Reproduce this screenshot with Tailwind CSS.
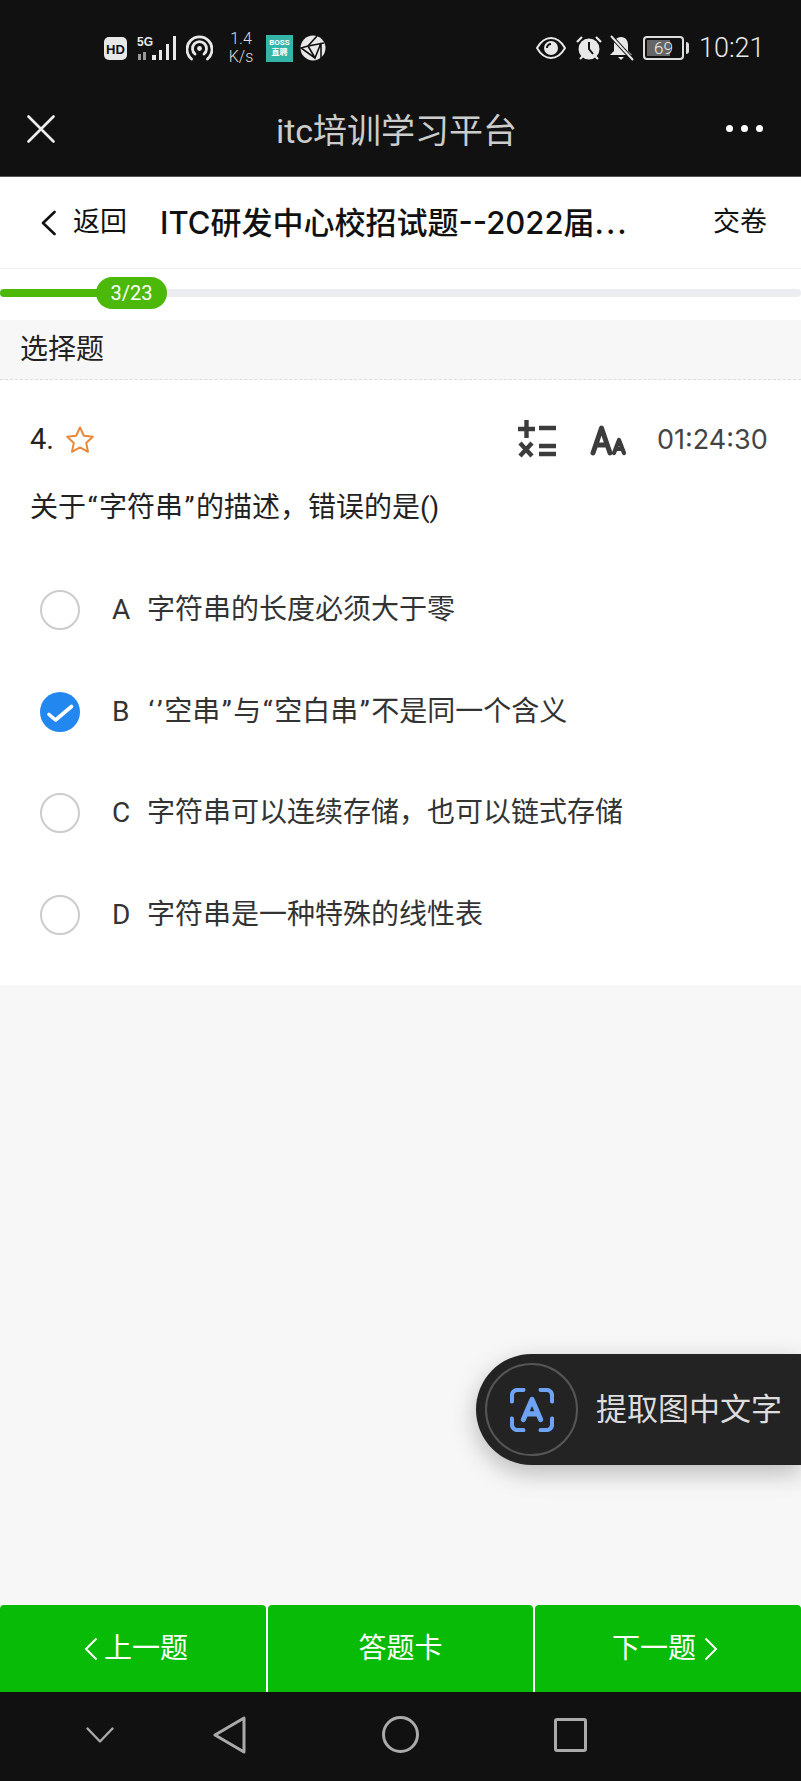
<!DOCTYPE html>
<html lang="zh-CN">
<head>
<meta charset="UTF-8">
<meta name="viewport" content="width=device-width, initial-scale=1.0">
<script src="https://cdn.jsdelivr.net/npm/@tailwindcss/browser@4"></script>
<title>itc培训学习平台</title>
</head>
<body>
<div class="relative flex h-[1781px] w-[801px] flex-col overflow-hidden bg-[#f7f7f7] font-['Roboto','Noto_Sans_CJK_SC',sans-serif]">

  <!-- status bar -->
  <div class="flex h-[96px] items-center bg-[#111] pl-[104px] text-[#e8e8e8]">
    <svg class="h-[23px] w-[23px]" viewBox="0 0 23 23"><rect width="23" height="23" rx="5" fill="#e8e8e8"/><text x="11.5" y="16.5" text-anchor="middle" font-size="13" font-weight="700" fill="#111" font-family="Liberation Sans">HD</text></svg>
    <svg class="ml-[10px] h-[26px] w-[40px]" viewBox="0 0 40 26">
      <text x="0" y="11" font-size="12" font-weight="700" fill="#e8e8e8" font-family="Liberation Sans">5G</text>
      <path d="M1 19h3v6H1zM6 17h3v8H6z" fill="#999"/>
      <path d="M15 20h4v5h-4zM22 15h3v10h-3zM29 9h3v16h-3zM36 1h3v24h-3z" fill="#e8e8e8"/>
    </svg>
    <svg class="ml-[9px] h-[27px] w-[27px]" viewBox="0 0 27 27" fill="none" stroke="#e8e8e8" stroke-width="2.8" stroke-linecap="round">
      <path d="M5.5 24a12.5 12.5 0 1 1 16 0"/><path d="M9 19a7 7 0 1 1 9 0"/><circle cx="13.5" cy="13.5" r="2.4" fill="#e8e8e8" stroke="none"/>
    </svg>
    <div class="ml-[14px] flex w-[28px] flex-col items-center text-[16px] leading-[18px] font-light text-[#ddd]"><span>1.4</span><span>K/s</span></div>
    <div class="ml-[11px] flex h-[27px] w-[27px] flex-col items-center justify-center bg-[#34b5a8] text-[8px] leading-[10px] font-bold text-white"><span>BOSS</span><span>直聘</span></div>
    <svg class="ml-[7px] h-[26px] w-[26px]" viewBox="0 0 26 26">
      <circle cx="13" cy="13" r="12.5" fill="#e8e8e8"/>
      <path d="M17 1 8 11l16-3M8 11l-7 2 14 10M8 11l7 12 6-15v15" fill="none" stroke="#111" stroke-width="1.6"/>
    </svg>

    <svg class="ml-[210px] h-[22px] w-[30px]" viewBox="0 0 30 22">
      <path d="M1 11C5 4 10 1 15 1s10 3 14 10c-4 7-9 10-14 10S5 18 1 11Z" fill="none" stroke="#e8e8e8" stroke-width="2"/>
      <circle cx="15" cy="11" r="7" fill="#e8e8e8"/><path d="M11 11a4 4 0 0 1 4-4" stroke="#111" stroke-width="2" fill="none"/>
    </svg>
    <svg class="ml-[9px] h-[26px] w-[28px]" viewBox="0 0 28 26">
      <circle cx="14" cy="14" r="10.5" fill="#e8e8e8"/>
      <path d="M14 7v7l4 5" fill="none" stroke="#111" stroke-width="2"/>
      <path d="M2 7l5-5M26 7l-5-5M5 24l3-3M23 24l-3-3" stroke="#e8e8e8" stroke-width="2.2" fill="none"/>
    </svg>
    <svg class="ml-[6px] h-[26px] w-[25px]" viewBox="0 0 25 26">
      <path d="M12 2c5 0 7 4 7 8v6l4 4H1l4-4v-6c0-4 2-8 7-8Z" fill="#e8e8e8"/><path d="M9 22h6l-3 3z" fill="#e8e8e8"/>
      <path d="M2 1l22 24" stroke="#111" stroke-width="4"/><path d="M2 1l22 24" stroke="#e8e8e8" stroke-width="2"/>
    </svg>
    <div class="ml-[9px] flex h-[24px] w-[41px] items-center rounded-[4px] border-2 border-[#ddd] p-[2px]">
      <div class="flex h-full w-full items-center justify-center bg-[linear-gradient(90deg,#666_0,#666_69%,transparent_69%)] text-[17px] leading-none font-light text-[#eee]">69</div>
    </div>
    <div class="ml-[2px] h-[12px] w-[3px] rounded-r-sm bg-[#ddd]"></div>
    <div class="ml-[10px] text-[27px] leading-none font-light text-[#e8e8e8]">10:21</div>
  </div>

  <!-- webview title bar -->
  <div class="flex h-[81px] items-center justify-between border-b border-[#555] bg-[#111] pr-[38px] pb-[15px] pl-[27px]">
    <svg class="h-[28px] w-[28px]" viewBox="0 0 28 28" stroke="#eee" stroke-width="2.6" stroke-linecap="round"><path d="M1.5 1.5l25 25M26.5 1.5l-25 25"/></svg>
    <div class="mt-[4px] ml-[12px] text-[34px] leading-none text-[#ccc]">itc培训学习平台</div>
    <div class="flex gap-[8px]">
      <span class="h-[7px] w-[7px] rounded-full bg-white"></span>
      <span class="h-[7px] w-[7px] rounded-full bg-white"></span>
      <span class="h-[7px] w-[7px] rounded-full bg-white"></span>
    </div>
  </div>

  <!-- page header -->
  <div class="flex h-[92px] items-center border-b border-[#eee] bg-white text-[#111]">
    <svg class="ml-[41px] h-[26px] w-[15px]" viewBox="0 0 15 26" fill="none" stroke="#111" stroke-width="2.6" stroke-linecap="round" stroke-linejoin="round"><path d="M13.5 2 2 13l11.5 11"/></svg>
    <span class="ml-[17px] text-[27px] leading-none">返回</span>
    <span class="ml-[33px] w-[520px] font-['Inter','Noto_Sans_CJK_SC',sans-serif] text-[31px] leading-none font-medium">ITC研发中心校招试题--2022届<span class="tracking-[2px]">...</span></span>
    <span class="ml-[33px] text-[27px] leading-none">交卷</span>
  </div>

  <!-- progress -->
  <div class="flex h-[51px] items-center bg-white pb-[3px]">
    <div class="relative h-[8px] w-full rounded-full bg-[#ebedf0]">
      <div class="h-full w-[100px] rounded-l-full bg-[#4cb90a]"></div>
      <div class="absolute top-[-12px] left-[96px] flex h-[32px] w-[71px] items-center justify-center rounded-full bg-[#4cb90a] text-[20px] text-white">3/23</div>
    </div>
  </div>

  <!-- section label -->
  <div class="flex h-[60px] items-center border-b border-dashed border-[#ddd] bg-[#f7f7f7] pl-[20px] text-[28px] leading-none text-[#222]">选择题</div>

  <!-- question -->
  <div class="h-[605px] bg-white px-[30px]">
    <div class="mt-[11px] flex h-[97px] items-center">
      <span class="text-[29px] leading-none text-[#222]">4.</span>
      <svg class="ml-[11px] h-[30px] w-[30px]" viewBox="0 0 30 30" fill="none" stroke="#e8883a" stroke-width="2" stroke-linejoin="round"><path d="M15 2.5l3.9 8.2 8.9 1.1-6.6 6.1 1.800 8.900L15 22.4l-8 4.400 1.800-8.900-6.600-6.100 8.900-1.100Z"/></svg>
      <svg class="mb-[2px] ml-[423px] h-[38px] w-[38px]" viewBox="0 0 38 38" fill="none" stroke="#3c3c3c" stroke-width="4.4">
        <path d="M0 9h17M8.500 0v18M21 8h17M21 26h17M21 34h17"/><path d="M2 23l12 13M14 23 2 36"/>
      </svg>
      <svg class="ml-[34px] h-[32px] w-[37px]" viewBox="0 0 37 32" fill="none" stroke="#3c3c3c" stroke-width="5" stroke-linecap="round" stroke-linejoin="round">
        <path d="M3 29 11.500 4 20 29M6.500 21h10"/><path d="M24 29l5-13 5 13M26 25h6" stroke-width="4.200"/>
      </svg>
      <span class="ml-[30px] font-['Inter',sans-serif] text-[27px] leading-none text-[#444]">01:24:30</span>
    </div>
    <div class="text-[28px] leading-[40px] text-[#222]">关于<span class="px-[1.5px]">“</span>字符串<span class="px-[1.5px]">”</span>的描述，错误的是()</div>

    <div class="mt-[62px] flex flex-col gap-[61.5px] text-[28px] leading-[40px] text-[#333]">
      <div class="flex items-center">
        <span class="ml-[10px] h-[40px] w-[40px] rounded-full border-2 border-[#ccc]"></span>
        <span class="ml-[32px] w-[35px]">A</span><span>字符串的长度必须大于零</span>
      </div>
      <div class="flex items-center">
        <svg class="ml-[10px] h-[40px] w-[40px]" viewBox="0 0 40 40"><circle cx="20" cy="20" r="20" fill="#2288f0"/><path d="M9 22.500l6.500 5.500L31.500 14.500" fill="none" stroke="#fff" stroke-width="3.600" stroke-linecap="round" stroke-linejoin="round"/></svg>
        <span class="ml-[32px] w-[35px]">B</span><span><span class="px-[1.5px]">‘</span><span class="px-[1.5px]">’</span>空串<span class="px-[1.5px]">”</span>与<span class="px-[1.5px]">“</span>空白串<span class="px-[1.5px]">”</span>不是同一个含义</span>
      </div>
      <div class="flex items-center">
        <span class="ml-[10px] h-[40px] w-[40px] rounded-full border-2 border-[#ccc]"></span>
        <span class="ml-[32px] w-[35px]">C</span><span>字符串可以连续存储，也可以链式存储</span>
      </div>
      <div class="flex items-center">
        <span class="ml-[10px] h-[40px] w-[40px] rounded-full border-2 border-[#ccc]"></span>
        <span class="ml-[32px] w-[35px]">D</span><span>字符串是一种特殊的线性表</span>
      </div>
    </div>
  </div>

  <div class="flex-1"></div>

  <!-- bottom buttons -->
  <div class="flex h-[87px] gap-[2px] bg-white text-[28px] leading-none text-white">
    <div class="flex w-[266px] items-center justify-center gap-[6px] rounded-t-[4px] bg-[#08bb06] pl-[6px]">
      <svg class="h-[24px] w-[14px]" viewBox="0 0 14 24" fill="none" stroke="#fff" stroke-width="2"><path d="M12.500 1.500 2 12l10.500 10.500"/></svg>
      <span>上一题</span>
    </div>
    <div class="flex w-[265px] items-center justify-center rounded-t-[4px] bg-[#08bb06]">答题卡</div>
    <div class="flex flex-1 items-center justify-center gap-[8px] rounded-t-[4px] bg-[#08bb06] pr-[6px]">
      <span>下一题</span>
      <svg class="h-[24px] w-[14px]" viewBox="0 0 14 24" fill="none" stroke="#fff" stroke-width="2"><path d="M1.500 1.500 12 12 1.500 22.500"/></svg>
    </div>
  </div>

  <!-- system nav -->
  <div class="flex h-[89px] items-center bg-[#111] pb-[4px]">
    <svg class="ml-[86px] h-[16px] w-[28px]" viewBox="0 0 28 16" fill="none" stroke="#aaa" stroke-width="2.400" stroke-linecap="round" stroke-linejoin="round"><path d="M1.500 1.500 14 14.500 26.500 1.500"/></svg>
    <svg class="ml-[99px] h-[38px] w-[33px]" viewBox="0 0 33 38" fill="none" stroke="#aaa" stroke-width="3" stroke-linejoin="round"><path d="M31 2v34L2 19Z"/></svg>
    <span class="ml-[136px] h-[37px] w-[37px] rounded-full border-[3px] border-[#aaa]"></span>
    <span class="ml-[135px] h-[34px] w-[33px] rounded-[3px] border-[3px] border-[#aaa]"></span>
  </div>

  <!-- floating text-extract pill -->
  <div class="absolute top-[1354px] left-[476px] flex h-[111px] w-[325px] items-center rounded-l-[56px] bg-[#232323] pl-[9px] shadow-[0_8px_24px_rgba(0,0,0,0.25)]">
    <div class="flex h-[93px] w-[93px] items-center justify-center rounded-full border-2 border-[#555]">
      <svg class="h-[44px] w-[44px]" viewBox="0 0 46 46" fill="none" stroke="#6ea2f5" stroke-width="4.400" stroke-linecap="round" stroke-linejoin="round">
        <path d="M2 14V8a6 6 0 0 1 6-6h6M32 2h6a6 6 0 0 1 6 6v6M44 32v6a6 6 0 0 1-6 6h-6M14 44H8a6 6 0 0 1-6-6v-6"/>
        <path d="M14 33 23 12l9 21M17 27h12" stroke-width="5.400"/>
      </svg>
    </div>
    <span class="ml-[18px] text-[31px] leading-none whitespace-nowrap text-[#ddd]">提取图中文字</span>
  </div>
</div>
</body>
</html>
